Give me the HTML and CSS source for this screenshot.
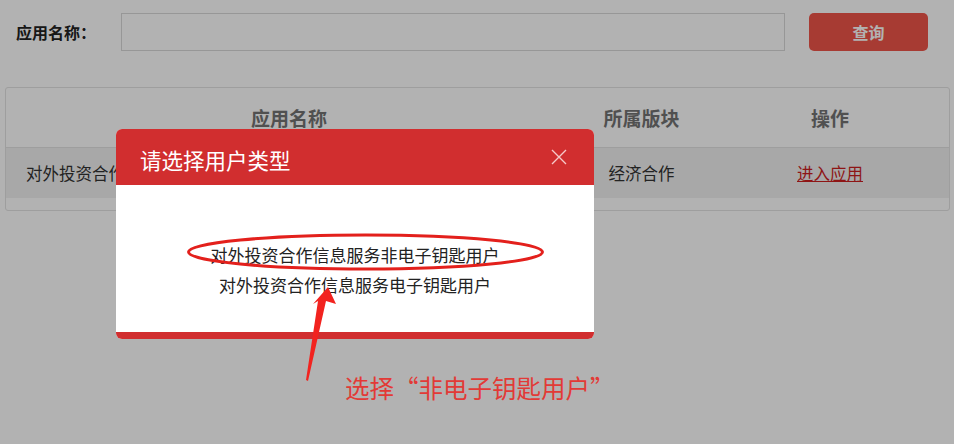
FILE: index.html
```html
<!DOCTYPE html>
<html lang="zh-CN">
<head>
<meta charset="utf-8">
<title>应用列表</title>
<link rel="stylesheet" href="styles.css">
</head>
<body>
<div class="page">
  <form class="search">
    <label class="search-label">应用名称：</label>
    <input class="search-input" type="text">
    <button class="search-btn" type="button">查询</button>
  </form>
  <div class="table-box">
    <table class="grid">
      <thead>
        <tr><th class="c1">应用名称</th><th class="c2">所属版块</th><th class="c3">操作</th></tr>
      </thead>
      <tbody>
        <tr><td class="c1 left">对外投资合作信息服务</td><td class="c2">经济合作</td><td class="c3"><a class="enter" href="#">进入应用</a></td></tr>
      </tbody>
    </table>
  </div>
</div>
<div class="mask"></div>
<div class="dialog">
  <div class="dialog-head">
    <span class="dialog-title">请选择用户类型</span>
    <span class="dialog-close">
      <svg width="16" height="16" viewBox="0 0 16 16"><path d="M1 1L15 15M15 1L1 15" stroke="#f6c9c9" stroke-width="1.4" fill="none"/></svg>
    </span>
  </div>
  <div class="dialog-body">
    <a class="opt" href="#">对外投资合作信息服务非电子钥匙用户</a>
    <a class="opt" href="#">对外投资合作信息服务电子钥匙用户</a>
  </div>
  <div class="dialog-foot"></div>
</div>
<svg class="marks" width="954" height="444" viewBox="0 0 954 444">
  <ellipse cx="365.5" cy="252" rx="177" ry="17" fill="none" stroke="#e3201c" stroke-width="3"/>
  <polygon points="328,287 336,304 326,301 308,381 306,380 318,301 313,304" fill="#f2231f"/>
</svg>
<div class="note">选择“非电子钥匙用户”</div>
</body>
</html>
```
FILE: styles.css
```css
* { box-sizing: border-box; }
html, body { margin: 0; padding: 0; }
body {
  width: 954px;
  height: 444px;
  overflow: hidden;
  background: #fff;
  font-family: "Noto Sans CJK SC", "Noto Sans", sans-serif;
  color: #333;
  position: relative;
}
.page { padding: 13px 0 0 0; }
.search {
  display: flex;
  align-items: center;
  margin: 0;
  padding: 0 26px 0 16px;
  height: 38px;
}
.search-label {
  width: 105px;
  font-size: 16px;
  font-weight: bold;
  color: #222;
}
.search-input {
  flex: 1;
  height: 38px;
  border: 1px solid #d8d8d8;
  background: #fff;
  margin: 0;
}
.search-btn {
  margin-left: 24px;
  width: 119px;
  height: 38px;
  border: none;
  border-radius: 5px;
  background: #f0554a;
  color: #fff;
  font-family: inherit;
  font-size: 16px;
  font-weight: bold;
}
.table-box {
  margin: 36px 4px 0 5px;
  border: 1px solid #e2e2e2;
  border-radius: 3px;
  padding-bottom: 12px;
}
.grid {
  width: 100%;
  border-collapse: collapse;
}
.grid th {
  height: 59px;
  font-size: 19px;
  font-weight: bold;
  color: #737373;
  border-bottom: 1px solid #e2e2e2;
  text-align: center;
  padding: 0;
}
.grid td {
  height: 51px;
  font-size: 16.5px;
  color: #333;
  background: #f1f1f1;
  text-align: center;
  padding: 0;
}
.grid td.left { text-align: left; padding-left: 20px; }
.c1 { width: 566px; }
.c2 { width: 139px; }
.enter {
  color: #cc1f1f;
  text-decoration: underline;
  font-size: 16.5px;
}
.mask {
  position: absolute;
  left: 0; top: 0;
  width: 954px; height: 444px;
  background: rgba(0, 0, 0, 0.3);
}
.dialog {
  position: absolute;
  left: 116px;
  top: 129px;
  width: 478px;
  border-radius: 6px;
  overflow: hidden;
  background: #fff;
  display: flex;
  flex-direction: column;
}
.dialog-head {
  height: 56px;
  background: #d12e2f;
  display: flex;
  align-items: center;
  justify-content: space-between;
  padding: 0 27px 0 24px;
}
.dialog-title {
  color: #fff;
  font-size: 21.5px;
  padding-top: 4px;
}
.dialog-close { display: flex; }
.dialog-body {
  height: 147px;
  display: flex;
  flex-direction: column;
  align-items: center;
  padding-top: 58px;
  gap: 6px;
}
.opt {
  color: #222;
  font-size: 17px;
  line-height: 24px;
  text-decoration: none;
}
.dialog-foot {
  height: 7px;
  background: #d12e2f;
}
.marks {
  position: absolute;
  left: 0; top: 0;
}
.note {
  position: absolute;
  left: 345px;
  top: 372px;
  font-size: 24.5px;
  line-height: 32px;
  color: #e23a36;
}
```
